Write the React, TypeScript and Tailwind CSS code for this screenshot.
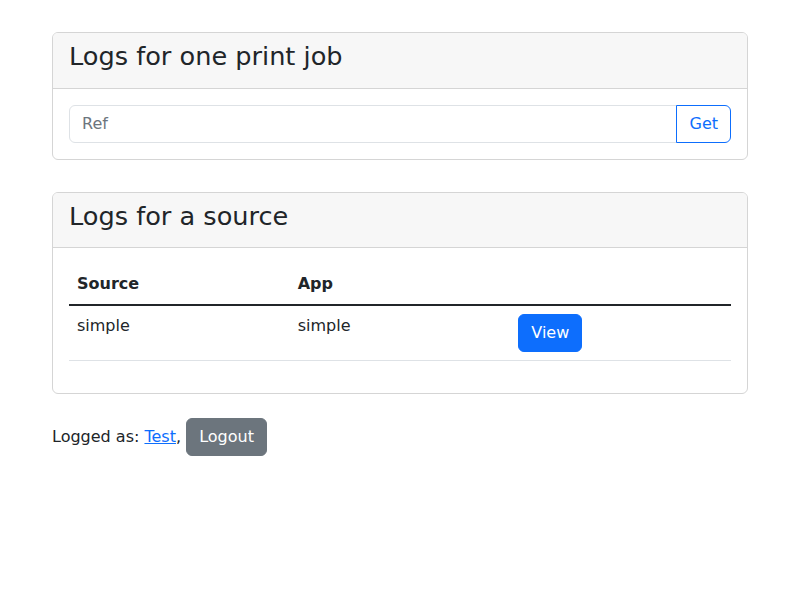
export default function App() {
  return (
    <div
      className="min-h-screen bg-white text-[#212529] text-base leading-6"
      style={{ fontFamily: '"DejaVu Sans", sans-serif' }}
    >
      <div className="mx-auto w-[720px] px-3 pt-8">
        <div className="rounded-[6px] border border-[#d5d5d5] bg-white">
          <div className="rounded-t-[5px] border-b border-[#d5d5d5] bg-[#f7f7f7] px-4 py-2">
            <h3 className="mb-2 text-[25.6px] font-medium leading-[1.2]">Logs for one print job</h3>
          </div>
          <div className="p-4">
            <div className="flex">
              <input
                className="min-w-0 flex-1 rounded-l-[6px] border border-[#dee2e6] px-3 py-1.5 text-base leading-6 text-[#212529] placeholder:text-[#6c757d] outline-none"
                placeholder="Ref"
              />
              <button className="-ml-px rounded-r-[6px] border border-[#0d6efd] bg-white px-3 py-1.5 text-base leading-6 text-[#0d6efd]">
                Get
              </button>
            </div>
          </div>
        </div>

        <div className="mt-8 rounded-[6px] border border-[#d5d5d5] bg-white">
          <div className="rounded-t-[5px] border-b border-[#d5d5d5] bg-[#f7f7f7] px-4 py-2">
            <h3 className="mb-2 text-[25.6px] font-medium leading-[1.2]">Logs for a source</h3>
          </div>
          <div className="p-4">
            <table className="mb-4 w-full border-collapse">
              <thead>
                <tr>
                  <th className="w-1/3 border-b-2 border-[#212529] p-2 text-left align-top font-bold">Source</th>
                  <th className="w-1/3 border-b-2 border-[#212529] p-2 text-left align-top font-bold">App</th>
                  <th className="w-1/3 border-b-2 border-[#212529] p-2 text-left align-top font-bold"></th>
                </tr>
              </thead>
              <tbody>
                <tr>
                  <td className="border-b border-[#dee2e6] p-2 align-top">simple</td>
                  <td className="border-b border-[#dee2e6] p-2 align-top">simple</td>
                  <td className="border-b border-[#dee2e6] p-2 align-top">
                    <button className="rounded-[6px] border border-[#0d6efd] bg-[#0d6efd] px-3 py-1.5 text-base leading-6 text-white">
                      View
                    </button>
                  </td>
                </tr>
              </tbody>
            </table>
          </div>
        </div>

        <div className="mt-6">
          Logged as:{" "}
          <a href="#" className="text-[#0d6efd] underline">
            Test
          </a>
          ,{" "}
          <button className="inline-block rounded-[6px] border border-[#6c757d] bg-[#6c757d] px-3 py-1.5 text-base leading-6 text-white">
            Logout
          </button>
        </div>
      </div>
    </div>
  );
}
